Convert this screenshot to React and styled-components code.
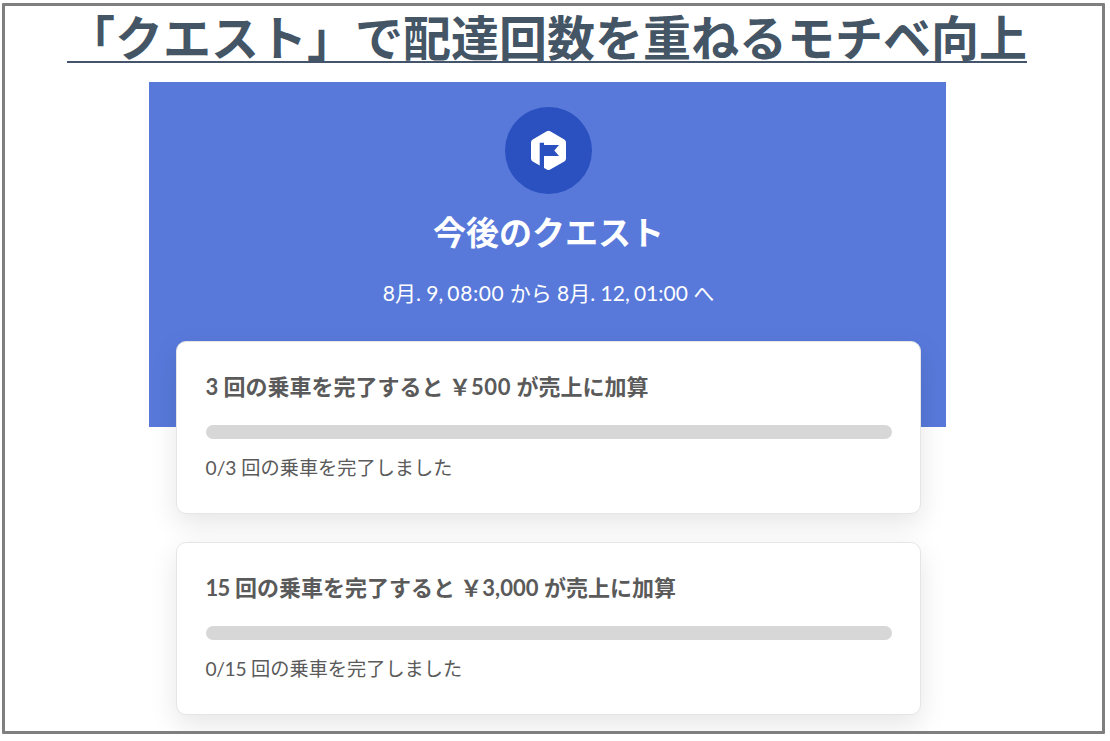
import React, { Component } from 'react'

import styled, { createGlobalStyle } from 'styled-components'

const GlobalStyle = createGlobalStyle`
  * {
    box-sizing: border-box;
  }

  body {
    margin: 0;
    background: #fff;
    font-family: Lato, 'Noto Sans CJK JP', sans-serif;
  }
`

const Page = styled.div`
  height: 741px;
  padding: 3px 5px 7px 2px;
`

const Slide = styled.main`
  height: 731px;
  border: 3px solid #7f7f7f;
  border-radius: 1px;
`

const Title = styled.h1`
  width: 960px;
  height: 57px;
  margin: 0 0 19px 62px;
  border-bottom: 2px solid #44546a;
  color: #445566;
  font: bold 48px/58px 'Noto Sans CJK JP', sans-serif;
  white-space: nowrap;
`

const Quest = styled.section`
  width: 797px;
  height: 649px;
  margin-left: 144px;
  overflow: hidden;
`

const Banner = styled.header`
  display: flex;
  flex-direction: column;
  align-items: center;
  height: 345.4px;
  padding: 25px 0 0 2px;
  background: #5879da;
  color: #fff;
`

const Badge = styled.div`
  display: flex;
  width: 87px;
  height: 87px;
  border-radius: 50%;
  background: #2b50c0;
`

const Heading = styled.h2`
  margin: 12px 0 0;
  font: bold 33px/50px 'Noto Sans CJK JP', sans-serif;
  white-space: nowrap;
`

const Period = styled.p`
  margin: 22px 0 0;
  font-size: 21px;
  line-height: 30px;
  white-space: pre;
`

const Run = styled.span`
  letter-spacing: ${({ $spacing }) => $spacing || 0}px;
`

const Cards = styled.div`
  display: grid;
  gap: 28.4px;
  margin: -86.4px 25px 0 27px;
`

const Card = styled.article`
  height: 173px;
  padding: 28px 28.5px 0 28px;
  border: 1.5px solid #e5e5e5;
  border-radius: 10px;
  background: #fff;
  box-shadow: 0 10px 28px rgba(0, 0, 0, 0.1);
  color: #5a5a5a;
`

const Reward = styled.h3`
  margin: 0 0 0 0.5px;
  font-size: 22px;
  font-weight: bold;
  line-height: 34.4px;
  white-space: pre;
`

const Track = styled.div`
  height: 14px;
  margin: 20.6px 0 14px 0.5px;
  border-radius: 7px;
  background: #d7d7d7;
`

const Progress = styled.p`
  margin: 0 0 0 0.5px;
  font-size: 19.2px;
  line-height: 30.4px;
  white-space: pre;
`

const quests = [
  { count: 3, reward: '500', countSpacing: 0, rewardSpacing: 0.6 },
  { count: 15, reward: '3,000', countSpacing: -0.7, rewardSpacing: 0 }
]

class App extends Component {
  render() {
    const getBadge = () => {
      return (
        <Badge>
          <svg width="87" height="87" viewBox="0 0 87 87">
            <path
              d="M45.2 24.3 59.3 32.4Q61 33.4 61 35.4V51.6Q61 53.6 59.3 54.6L45.2 62.6Q43.5 63.6 41.8 62.6L27.7 54.6Q26 53.6 26 51.6V35.4Q26 33.4 27.7 32.4L41.8 24.3Q43.5 23.4 45.2 24.3Z"
              fill="#fff"
            />
            <path
              d="M34.7 35.7H39V38H54L49.3 43.5 54 49H39V63H34.7Z"
              fill="#2b50c0"
            />
          </svg>
        </Badge>
      )
    }

    const getCard = ({ count, reward, countSpacing, rewardSpacing }) => {
      return (
        <Card key={count}>
          <Reward>
            <Run $spacing={countSpacing}>{count}</Run> 回の乗車を完了すると ￥
            <Run $spacing={rewardSpacing}>{reward}</Run> が売上に加算
          </Reward>
          <Track />
          <Progress>
            <Run $spacing={countSpacing / 2}>0/{count}</Run> 回の乗車を完了しました
          </Progress>
        </Card>
      )
    }

    return (
      <Page>
        <GlobalStyle />
        <Slide>
          <Title>「クエスト」で配達回数を重ねるモチベ向上</Title>
          <Quest>
            <Banner>
              {getBadge()}
              <Heading>今後のクエスト</Heading>
              <Period>
                8月. 9<Run $spacing={-0.6}>, </Run>
                <Run $spacing={0.6}>08:00</Run> から 8月. 12
                <Run $spacing={-0.6}>, </Run>01:00 へ
              </Period>
            </Banner>
            <Cards>{quests.map(getCard)}</Cards>
          </Quest>
        </Slide>
      </Page>
    )
  }
}

export default App
